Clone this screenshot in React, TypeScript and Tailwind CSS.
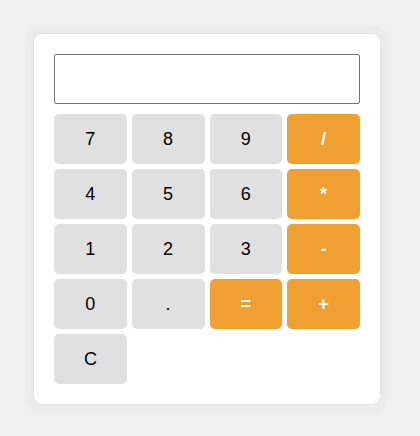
const keys: { label: string; op?: boolean }[] = [
  { label: '7' }, { label: '8' }, { label: '9' }, { label: '/', op: true },
  { label: '4' }, { label: '5' }, { label: '6' }, { label: '*', op: true },
  { label: '1' }, { label: '2' }, { label: '3' }, { label: '-', op: true },
  { label: '0' }, { label: '.' }, { label: '=', op: true }, { label: '+', op: true },
  { label: 'C' },
]

export default function App() {
  return (
    <div className="flex h-[436px] w-[420px] items-start bg-[#f0f0f0] pl-[34px] pt-[34px] font-['Liberation_Sans',Arial,sans-serif]">
      <div className="w-[346px] rounded-[8px] bg-white p-5 shadow-[0_0_1px_1px_#e2e2e2,0_0_3px_9px_#ebebeb]">
        <input
          type="text"
          readOnly
          className="mb-[10px] block h-[50px] w-full rounded-[2px] border border-[#767676] bg-white outline-none"
        />
        <div className="grid grid-cols-4 gap-[5px]">
          {keys.map((k) => (
            <button
              key={k.label}
              className={
                k.op
                  ? 'h-[50px] rounded-[5px] bg-[#f0a030] text-[18px] font-bold text-white'
                  : 'h-[50px] rounded-[5px] bg-[#e0e0e0] text-[18px] text-black'
              }
            >
              {k.label}
            </button>
          ))}
        </div>
      </div>
    </div>
  )
}
